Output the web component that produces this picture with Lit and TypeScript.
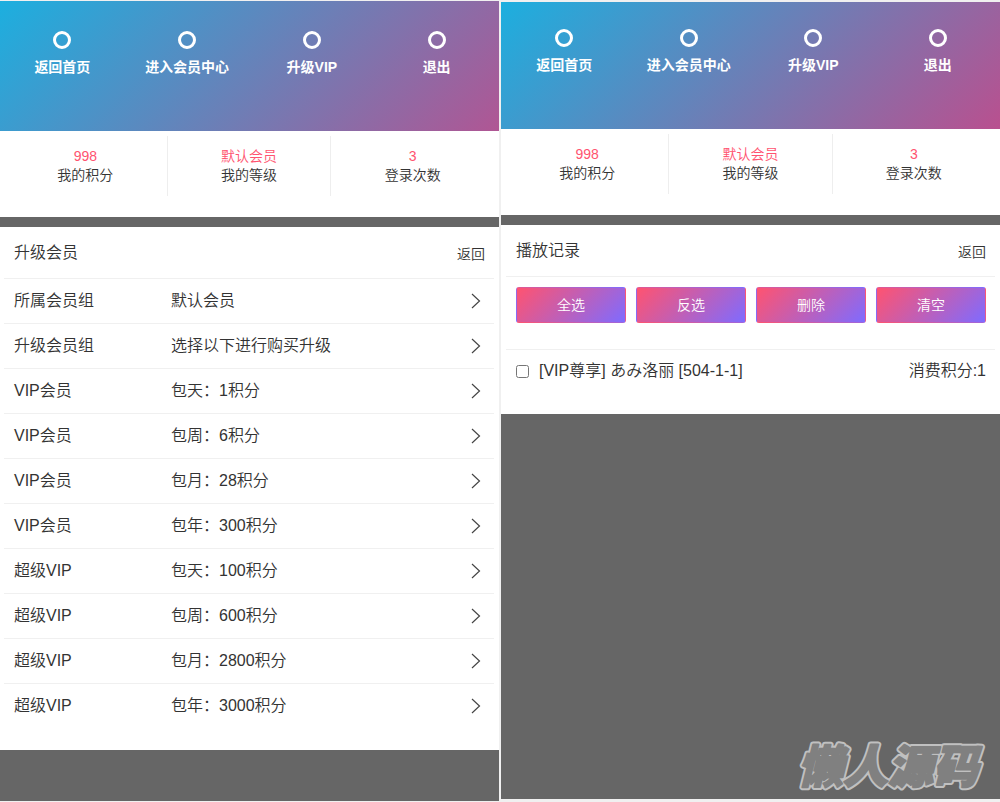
import { LitElement, html, css } from "lit";
import { customElement, property } from "lit/decorators.js";

const fontStack = css`"Liberation Sans", "Noto Sans CJK SC", "Noto Sans CJK JP", sans-serif`;

@customElement("member-header")
class MemberHeader extends LitElement {
  static styles = css`
    :host {
      display: block;
    }
    .nav {
      display: grid;
      grid-template-columns: repeat(4, 1fr);
      box-sizing: border-box;
      height: var(--nav-height, 130px);
      padding-top: var(--nav-pad, 30px);
      padding-left: var(--nav-shift, 0);
      background: linear-gradient(135deg, #1cafdf, var(--nav-end, #b05694));
    }
    .link {
      display: flex;
      flex-direction: column;
      align-items: center;
      gap: 8px;
      color: #fff;
      font-size: 14px;
      line-height: 20px;
      font-weight: 700;
      text-decoration: none;
    }
    .ring {
      width: 18px;
      height: 18px;
      display: block;
    }
    .stats {
      display: grid;
      grid-template-columns: repeat(3, 1fr);
      padding: 5px 4px 21px var(--inset, 4px);
      background: #fff;
    }
    .stat {
      box-sizing: border-box;
      height: 60px;
      padding-top: 11px;
      text-align: center;
      font-size: 14px;
      line-height: 19px;
      border-right: 1px solid #eee;
    }
    .stat:last-child {
      border-right-color: transparent;
    }
    .num {
      color: #ff5370;
    }
  `;

  render() {
    const links = ["返回首页", "进入会员中心", "升级VIP", "退出"];
    const stats = [
      ["998", "我的积分"],
      ["默认会员", "我的等级"],
      ["3", "登录次数"],
    ];
    return html`
      <nav class="nav">
        ${links.map(
          (t) => html`<a class="link" href="#">
            <svg class="ring" viewBox="0 0 18 18" aria-hidden="true">
              <circle cx="9" cy="9" r="7.5" fill="none" stroke="#fff" stroke-width="3" />
            </svg>
            <span>${t}</span>
          </a>`
        )}
      </nav>
      <div class="stats">
        ${stats.map(
          ([n, t]) => html`<div class="stat"><div class="num">${n}</div><div>${t}</div></div>`
        )}
      </div>
    `;
  }
}

@customElement("panel-title")
class PanelTitle extends LitElement {
  @property() text = "";

  static styles = css`
    :host {
      display: block;
    }
    .bar {
      display: flex;
      justify-content: space-between;
      align-items: center;
      box-sizing: border-box;
      height: 52px;
      padding: 0 9px 0 10px;
      border-bottom: 1px solid #f0f0f0;
    }
    .title {
      margin: 0;
      font-size: 16px;
      line-height: 24px;
      font-weight: inherit;
    }
    .back {
      padding-top: 2px;
      font-size: 14px;
      line-height: 20px;
      color: inherit;
      text-decoration: none;
    }
  `;

  render() {
    return html`<div class="bar">
      <h2 class="title">${this.text}</h2>
      <a class="back" href="#">返回</a>
    </div>`;
  }
}

@customElement("app-root")
class AppRoot extends LitElement {
  static styles = css`
    :host {
      display: block;
      font-family: ${fontStack};
      font-weight: 350;
      color: #333;
      background: #f0f0f0;
    }
    .screens {
      display: grid;
      grid-template-columns: 1fr 1fr;
      gap: 2px;
      min-height: 100vh;
      box-sizing: border-box;
      padding: 1px 0;
    }
    .screen {
      position: relative;
      background: #666;
    }
    .history {
      --nav-height: 127px;
      --nav-pad: 27px;
      --nav-shift: 1px;
      --nav-end: #b9508f;
      --inset: 5px;
      margin: 1px 0 2px;
    }
    .card {
      margin-top: 10px;
      padding: 0 5px 21px var(--inset, 4px);
      background: #fff;
    }
    .rows {
      list-style: none;
      margin: 0;
      padding: 0;
    }
    .row {
      border-bottom: 1px solid #f0f0f0;
    }
    .row:last-child {
      border-bottom-color: transparent;
    }
    .rowlink {
      display: grid;
      grid-template-columns: 157px 1fr 10px;
      align-items: center;
      height: 44px;
      padding: 0 13px 0 10px;
      font-size: 16px;
      line-height: 22px;
      color: inherit;
      text-decoration: none;
    }
    .chev {
      width: 10px;
      height: 16px;
      display: block;
    }
    .actions {
      display: grid;
      grid-template-columns: repeat(4, 1fr);
      gap: 10px;
      padding: 10px 9px 26px 10px;
      border-bottom: 1px solid #f0f0f0;
    }
    .btn {
      height: 36px;
      padding: 0 0 2px;
      border: 1px solid transparent;
      border-radius: 3px;
      background: linear-gradient(135deg, #ff5370, #7f6bff);
      color: #fff;
      font: inherit;
      font-size: 14px;
    }
    .record {
      display: flex;
      align-items: center;
      height: 43px;
      padding: 0 9px 0 10px;
      font-size: 16px;
      line-height: 22px;
    }
    .check {
      width: 13px;
      height: 13px;
      margin: 0 10px 0 0;
    }
    .label,
    .cost {
      padding-bottom: 2px;
    }
    .cost {
      margin-left: auto;
    }
    .mark {
      position: absolute;
      right: 12px;
      bottom: 0;
      width: 200px;
      height: 64px;
      pointer-events: none;
    }
    .glyphs {
      font-size: 45px;
      font-weight: 900;
      font-style: italic;
      stroke-linejoin: round;
    }
    .halo {
      fill: #c0c0c0;
      stroke: #c0c0c0;
      stroke-width: 6px;
    }
    .face {
      fill: #808080;
      stroke: #808080;
      stroke-width: 2px;
    }
  `;

  render() {
    const rows = [
      ["所属会员组", "默认会员"],
      ["升级会员组", "选择以下进行购买升级"],
      ["VIP会员", "包天：1积分"],
      ["VIP会员", "包周：6积分"],
      ["VIP会员", "包月：28积分"],
      ["VIP会员", "包年：300积分"],
      ["超级VIP", "包天：100积分"],
      ["超级VIP", "包周：600积分"],
      ["超级VIP", "包月：2800积分"],
      ["超级VIP", "包年：3000积分"],
    ];
    return html`
      <main class="screens" lang="zh-CN">
        <section class="screen">
          <member-header></member-header>
          <div class="card">
            <panel-title text="升级会员"></panel-title>
            <ul class="rows">
              ${rows.map(
                ([name, value]) => html`<li class="row">
                  <a class="rowlink" href="#">
                    <span>${name}</span>
                    <span>${value}</span>
                    <svg class="chev" viewBox="0 0 10 16" aria-hidden="true">
                      <path d="M1 1 8.5 8 1 15" fill="none" stroke="#444" stroke-width="1.2" />
                    </svg>
                  </a>
                </li>`
              )}
            </ul>
          </div>
        </section>
        <section class="screen history">
          <member-header></member-header>
          <div class="card">
            <panel-title text="播放记录"></panel-title>
            <div class="actions">
              ${["全选", "反选", "删除", "清空"].map(
                (t) => html`<button class="btn" type="button">${t}</button>`
              )}
            </div>
            <div class="record">
              <input class="check" id="record" type="checkbox" />
              <label class="label" for="record">[VIP尊享] あみ洛丽 [504-1-1]</label>
              <span class="cost">消费积分:1</span>
            </div>
          </div>
          <svg class="mark" viewBox="0 0 200 64">
            <text class="glyphs halo" x="10" y="48" aria-hidden="true">懒人源码</text>
            <text class="glyphs face" x="10" y="48">懒人源码</text>
          </svg>
        </section>
      </main>
    `;
  }
}
